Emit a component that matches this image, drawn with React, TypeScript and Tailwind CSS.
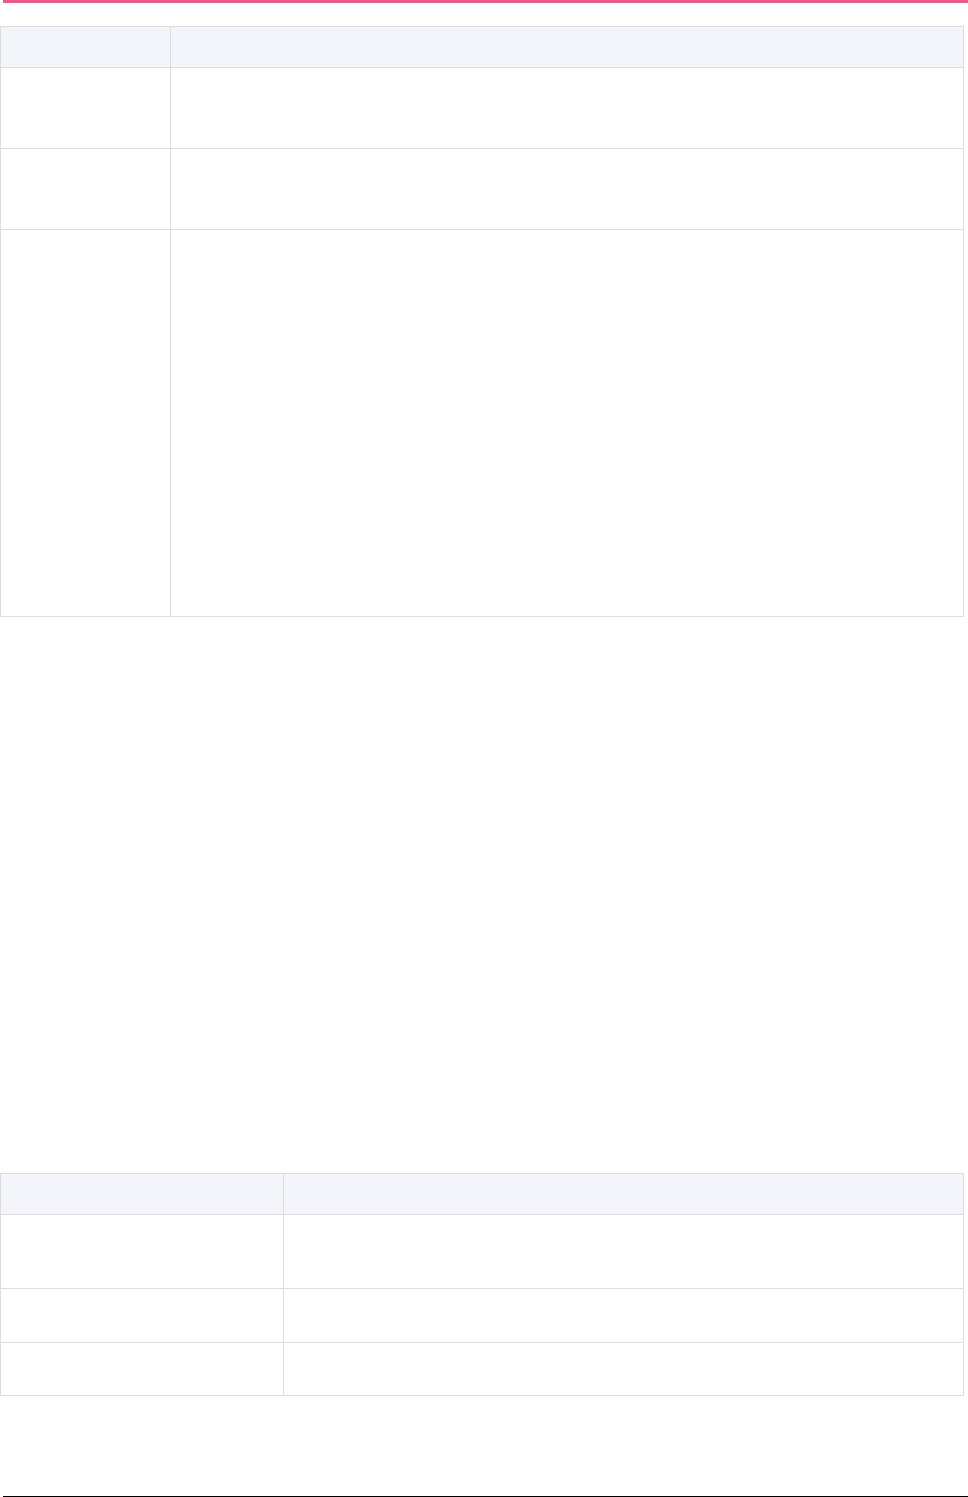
export default function App() {
  const t1 = [81, 81, 386];
  const t2 = [74, 54, 52];
  return (
    <div className="w-[968px] h-[1497px] bg-white flex flex-col font-['Liberation_Sans',sans-serif]">
      <div className="ml-[3px] h-[3px] bg-[#e95b8d]" />
      <div className="mt-[23px] w-[964px] border border-[#dcdcdc] flex flex-col">
        <div className="flex h-[41px] bg-[#f4f5fa] border-b border-[#dcdcdc]">
          <div className="w-[170px] border-r border-[#dcdcdc]" />
          <div className="flex-1" />
        </div>
        {t1.map((h, i) => (
          <div
            key={i}
            className={i < t1.length - 1 ? "flex border-b border-[#dcdcdc]" : "flex"}
            style={{ height: h }}
          >
            <div className="w-[170px] border-r border-[#dcdcdc]" />
            <div className="flex-1" />
          </div>
        ))}
      </div>
      <div className="mt-[556px] w-[964px] border border-[#dcdcdc] flex flex-col">
        <div className="flex h-[41px] bg-[#f4f5fa] border-b border-[#dcdcdc]">
          <div className="w-[283px] border-r border-[#dcdcdc]" />
          <div className="flex-1" />
        </div>
        {t2.map((h, i) => (
          <div
            key={i}
            className={i < t2.length - 1 ? "flex border-b border-[#dcdcdc]" : "flex"}
            style={{ height: h }}
          >
            <div className="w-[283px] border-r border-[#dcdcdc]" />
            <div className="flex-1" />
          </div>
        ))}
      </div>
      <div className="mt-[100px] ml-[3px] h-[1px] bg-black" />
    </div>
  );
}
